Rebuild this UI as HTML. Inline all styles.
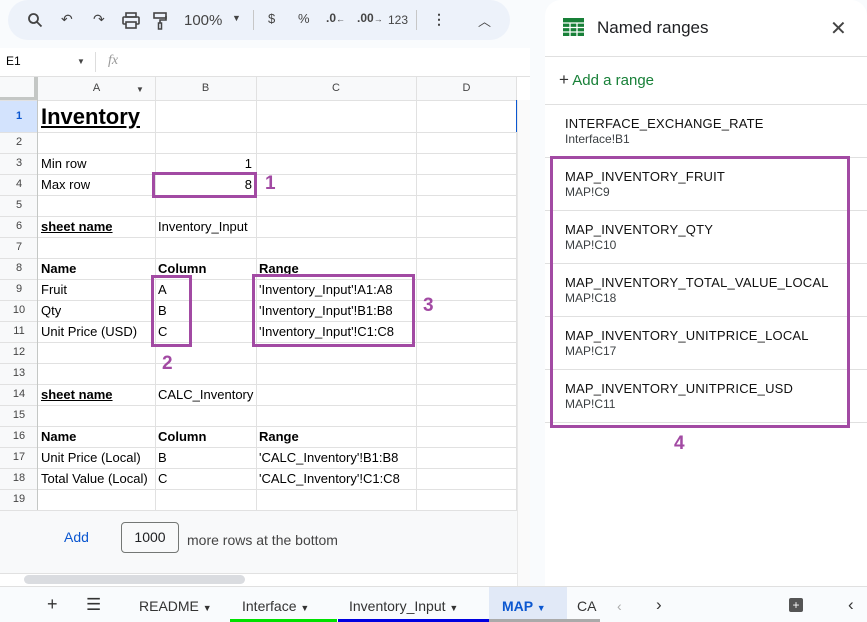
<!DOCTYPE html>
<html><head><meta charset="utf-8"><style>
*{box-sizing:border-box;margin:0;padding:0}
body{width:867px;height:622px;overflow:hidden;background:#f9fbfd;font-family:"Liberation Sans",Arial,sans-serif;position:relative;color:#000}
.a{position:absolute}
.tb{left:8px;top:0;width:502px;height:40px;border-radius:20px;background:#edf2fa}
.ti{position:absolute;top:11px;color:#444;font-size:14px}
.grid{left:0;top:48px;width:530px;height:538px;background:#fff}
.cell{position:absolute;font-size:13px;line-height:21px;white-space:nowrap;overflow:hidden}
.rn{position:absolute;left:0;width:38px;text-align:center;font-size:11px;color:#444;background:#f8f9fa}
.hl{position:absolute;left:0;width:517px;height:1px;background:#e1e1e1}
.vl{position:absolute;top:77px;width:1px;height:433px;background:#e1e1e1}
.pb{position:absolute;border:3px solid #a24aa3}
.pn{position:absolute;color:#a24aa3;font-weight:bold;font-size:19px}
.panel{left:545px;top:0;width:322px;height:586px;background:#fff;border-radius:16px 16px 0 0}
.it{position:absolute;left:20px;font-size:13px;color:#202124}
.it b{font-weight:normal;letter-spacing:.2px;display:block;font-size:13px;color:#111}
.it span{font-size:12px;color:#3c4043}
.dl{position:absolute;left:0;width:322px;height:1px;background:#e0e0e0}
.tab{position:absolute;top:598px;font-size:14px;color:#333}
</style></head><body>
<div class="a tb"></div>
<svg class="a" style="left:27px;top:12px" width="16" height="16" viewBox="0 0 16 16"><circle cx="6.5" cy="6.5" r="4.5" fill="none" stroke="#444" stroke-width="1.8"/><path d="M10 10l4.5 4.5" stroke="#444" stroke-width="1.8"/></svg>
<div class="ti" style="left:61px">↶</div>
<div class="ti" style="left:93px">↷</div>
<svg class="a" style="left:122px;top:12px" width="18" height="17" viewBox="0 0 18 17"><rect x="4" y="1" width="10" height="4" fill="none" stroke="#444" stroke-width="1.6"/><rect x="1" y="5" width="16" height="7" rx="1" fill="none" stroke="#444" stroke-width="1.6"/><rect x="4" y="10" width="10" height="6" fill="#edf2fa" stroke="#444" stroke-width="1.6"/></svg>
<svg class="a" style="left:153px;top:12px" width="14" height="18" viewBox="0 0 14 18"><rect x="1" y="1" width="12" height="5" fill="none" stroke="#444" stroke-width="1.6"/><path d="M13 4v4H7v3" fill="none" stroke="#444" stroke-width="1.6"/><rect x="5.5" y="11" width="3" height="6" fill="none" stroke="#444" stroke-width="1.5"/></svg>
<div class="ti" style="left:184px;top:12px;font-size:15px">100%</div>
<div class="ti" style="left:232px;top:13px;font-size:9px">▼</div>
<div class="a" style="left:253px;top:10px;width:1px;height:20px;background:#c7c7c7"></div>
<div class="ti" style="left:268px;font-size:13px">$</div>
<div class="ti" style="left:298px;font-size:13px">%</div>
<div class="ti" style="left:326px;font-size:12px;font-weight:bold">.0<span style="font-size:9px">←</span></div>
<div class="ti" style="left:357px;font-size:12px;font-weight:bold">.00<span style="font-size:9px">→</span></div>
<div class="ti" style="left:388px;font-size:12px;top:13px">123</div>
<div class="a" style="left:416px;top:10px;width:1px;height:20px;background:#c7c7c7"></div>
<div class="ti" style="left:432px;font-weight:bold">⋮</div>
<div class="ti" style="left:478px;font-size:13px">︿</div>

<div class="a grid"></div>
<div class="a" style="left:6px;top:54px;font-size:12px">E1</div>
<div class="a" style="left:77px;top:57px;font-size:8px;color:#444">▼</div>
<div class="a" style="left:95px;top:52px;width:1px;height:20px;background:#ddd"></div>
<div class="a" style="left:108px;top:53px;font-size:14px;color:#999;font-style:italic;font-family:'Liberation Serif',serif">fx</div>
<div class="a" style="left:0;top:76px;width:530px;height:1px;background:#e1e1e1"></div>
<div class="a" style="left:0;top:77px;width:517px;height:23px;background:#f8f9fa"></div>
<div class="a" style="left:0;top:77px;width:37px;height:23px;background:#f8f9fa;border-right:3px solid #c4c7c5;border-bottom:3px solid #c4c7c5"></div>
<div class="cell" style="left:38px;top:78px;width:117px;text-align:center;font-size:11px;color:#444">A</div>
<div class="cell" style="left:136px;top:79px;font-size:8px;color:#444">▼</div>
<div class="cell" style="left:155px;top:78px;width:101px;text-align:center;font-size:11px;color:#444">B</div>
<div class="cell" style="left:256px;top:78px;width:160px;text-align:center;font-size:11px;color:#444">C</div>
<div class="cell" style="left:416px;top:78px;width:101px;text-align:center;font-size:11px;color:#444">D</div>
<div class="a" style="left:0;top:100px;width:38px;height:32px;background:#d3e3fd"></div>
<div class="rn" style="top:100px;height:32px;line-height:32px;background:#d3e3fd;font-weight:bold;color:#0b57d0">1</div>
<div class="rn" style="top:132px;height:21px;line-height:21px">2</div>
<div class="rn" style="top:153px;height:21px;line-height:21px">3</div>
<div class="rn" style="top:174px;height:21px;line-height:21px">4</div>
<div class="rn" style="top:195px;height:21px;line-height:21px">5</div>
<div class="rn" style="top:216px;height:21px;line-height:21px">6</div>
<div class="rn" style="top:237px;height:21px;line-height:21px">7</div>
<div class="rn" style="top:258px;height:21px;line-height:21px">8</div>
<div class="rn" style="top:279px;height:21px;line-height:21px">9</div>
<div class="rn" style="top:300px;height:21px;line-height:21px">10</div>
<div class="rn" style="top:321px;height:21px;line-height:21px">11</div>
<div class="rn" style="top:342px;height:21px;line-height:21px">12</div>
<div class="rn" style="top:363px;height:21px;line-height:21px">13</div>
<div class="rn" style="top:384px;height:21px;line-height:21px">14</div>
<div class="rn" style="top:405px;height:21px;line-height:21px">15</div>
<div class="rn" style="top:426px;height:21px;line-height:21px">16</div>
<div class="rn" style="top:447px;height:21px;line-height:21px">17</div>
<div class="rn" style="top:468px;height:21px;line-height:21px">18</div>
<div class="rn" style="top:489px;height:21px;line-height:21px">19</div>
<div class="hl" style="top:100px"></div><div class="hl" style="top:132px"></div><div class="hl" style="top:153px"></div><div class="hl" style="top:174px"></div><div class="hl" style="top:195px"></div><div class="hl" style="top:216px"></div><div class="hl" style="top:237px"></div><div class="hl" style="top:258px"></div><div class="hl" style="top:279px"></div><div class="hl" style="top:300px"></div><div class="hl" style="top:321px"></div><div class="hl" style="top:342px"></div><div class="hl" style="top:363px"></div><div class="hl" style="top:384px"></div><div class="hl" style="top:405px"></div><div class="hl" style="top:426px"></div><div class="hl" style="top:447px"></div><div class="hl" style="top:468px"></div><div class="hl" style="top:489px"></div><div class="hl" style="top:510px"></div>
<div class="vl" style="left:37px;background:#c4c7c5"></div><div class="vl" style="left:155px"></div><div class="vl" style="left:256px"></div><div class="vl" style="left:416px"></div><div class="vl" style="left:516px"></div>
<div class="a" style="left:516px;top:100px;width:2px;height:32px;background:#0b57d0"></div>

<div class="cell" style="left:41px;top:104px;font-size:22px;line-height:25px;font-weight:bold;text-decoration:underline">Inventory</div>
<div class="cell" style="left:41px;top:153px">Min row</div>
<div class="cell" style="left:158px;top:153px;width:94px;text-align:right">1</div>
<div class="cell" style="left:41px;top:174px">Max row</div>
<div class="cell" style="left:158px;top:174px;width:94px;text-align:right">8</div>
<div class="cell" style="left:41px;top:216px;font-weight:bold;text-decoration:underline">sheet name</div>
<div class="cell" style="left:158px;top:216px;width:98px">Inventory_Input</div>
<div class="cell" style="left:41px;top:258px;font-weight:bold">Name</div>
<div class="cell" style="left:158px;top:258px;font-weight:bold">Column</div>
<div class="cell" style="left:259px;top:258px;font-weight:bold">Range</div>
<div class="cell" style="left:41px;top:279px">Fruit</div><div class="cell" style="left:158px;top:279px">A</div><div class="cell" style="left:259px;top:279px">'Inventory_Input'!A1:A8</div>
<div class="cell" style="left:41px;top:300px">Qty</div><div class="cell" style="left:158px;top:300px">B</div><div class="cell" style="left:259px;top:300px">'Inventory_Input'!B1:B8</div>
<div class="cell" style="left:41px;top:321px">Unit Price (USD)</div><div class="cell" style="left:158px;top:321px">C</div><div class="cell" style="left:259px;top:321px">'Inventory_Input'!C1:C8</div>
<div class="cell" style="left:41px;top:384px;font-weight:bold;text-decoration:underline">sheet name</div>
<div class="cell" style="left:158px;top:384px;width:98px">CALC_Inventory</div>
<div class="cell" style="left:41px;top:426px;font-weight:bold">Name</div>
<div class="cell" style="left:158px;top:426px;font-weight:bold">Column</div>
<div class="cell" style="left:259px;top:426px;font-weight:bold">Range</div>
<div class="cell" style="left:41px;top:447px">Unit Price (Local)</div><div class="cell" style="left:158px;top:447px">B</div><div class="cell" style="left:259px;top:447px">'CALC_Inventory'!B1:B8</div>
<div class="cell" style="left:41px;top:468px;width:114px">Total Value (Local)</div><div class="cell" style="left:158px;top:468px">C</div><div class="cell" style="left:259px;top:468px">'CALC_Inventory'!C1:C8</div>

<div class="a" style="left:0;top:511px;width:517px;height:63px;background:#f8f9fa"></div>
<div class="a" style="left:64px;top:529px;font-size:14px;color:#0b57d0">Add</div>
<div class="a" style="left:121px;top:522px;width:58px;height:31px;border:1px solid #747775;border-radius:4px;font-size:14px;text-align:center;line-height:29px;color:#202124">1000</div>
<div class="a" style="left:187px;top:532px;font-size:14px;color:#444">more rows at the bottom</div>
<div class="a" style="left:0;top:573px;width:517px;height:13px;background:#fff;border-top:1px solid #e1e1e1"></div>
<div class="a" style="left:24px;top:575px;width:221px;height:9px;border-radius:5px;background:#dadce0"></div>
<div class="a" style="left:517px;top:100px;width:13px;height:486px;background:#fafafa;border-left:1px solid #e8e8e8"></div>

<div class="pb" style="left:152px;top:172px;width:105px;height:26px"></div>
<div class="pb" style="left:151px;top:275px;width:41px;height:72px"></div>
<div class="pb" style="left:252px;top:274px;width:163px;height:73px"></div>
<div class="pn" style="left:265px;top:173px">1</div>
<div class="pn" style="left:162px;top:353px">2</div>
<div class="pn" style="left:423px;top:295px">3</div>

<div class="a panel">
<svg class="a" style="left:18px;top:18px" width="21" height="18" viewBox="0 0 21 18"><rect width="21" height="18" fill="#188038"/><path d="M0 5h21M0 9.5h21M0 14h21M7 5v13M14 5v13" stroke="#fff" stroke-width="1.3"/></svg>
<div class="a" style="left:52px;top:18px;font-size:17px;color:#202124">Named ranges</div>
<div class="a" style="left:285px;top:16px;font-size:20px;color:#444">✕</div>
<div class="dl" style="top:56px"></div>
<div class="a" style="left:14px;top:70px;font-size:15px;color:#188038"><span style="color:#333;font-size:17px">+</span> Add a range</div>
<div class="dl" style="top:104px"></div>
<div class="it" style="top:116px"><b>INTERFACE_EXCHANGE_RATE</b><span>Interface!B1</span></div>
<div class="dl" style="top:157px"></div>
<div class="it" style="top:169px"><b>MAP_INVENTORY_FRUIT</b><span>MAP!C9</span></div>
<div class="dl" style="top:210px"></div>
<div class="it" style="top:222px"><b>MAP_INVENTORY_QTY</b><span>MAP!C10</span></div>
<div class="dl" style="top:263px"></div>
<div class="it" style="top:275px"><b>MAP_INVENTORY_TOTAL_VALUE_LOCAL</b><span>MAP!C18</span></div>
<div class="dl" style="top:316px"></div>
<div class="it" style="top:328px"><b>MAP_INVENTORY_UNITPRICE_LOCAL</b><span>MAP!C17</span></div>
<div class="dl" style="top:369px"></div>
<div class="it" style="top:381px"><b>MAP_INVENTORY_UNITPRICE_USD</b><span>MAP!C11</span></div>
<div class="dl" style="top:422px"></div>
<div class="pb" style="left:5px;top:156px;width:300px;height:272px"></div>
<div class="pn" style="left:129px;top:433px">4</div>
</div>

<div class="a" style="left:0;top:586px;width:867px;height:36px;background:#f9fbfd;border-top:1px solid #e0e0e0"></div>
<div class="tab" style="left:47px;font-size:18px;top:594px">+</div>
<div class="tab" style="left:86px;font-size:17px;top:595px">☰</div>
<div class="tab" style="left:139px">README <span style="font-size:9px">▼</span></div>
<div class="tab" style="left:242px">Interface <span style="font-size:9px">▼</span></div>
<div class="a" style="left:230px;top:619px;width:107px;height:3px;background:#00e000"></div>
<div class="tab" style="left:349px">Inventory_Input <span style="font-size:9px">▼</span></div>
<div class="a" style="left:338px;top:619px;width:151px;height:3px;background:#0000e0"></div>
<div class="a" style="left:489px;top:587px;width:78px;height:35px;background:#e1e9f7"></div>
<div class="tab" style="left:502px;color:#0b57d0;font-weight:bold">MAP <span style="font-size:9px">▼</span></div>
<div class="a" style="left:489px;top:619px;width:78px;height:3px;background:#aaa"></div>
<div class="tab" style="left:577px">CA</div>
<div class="a" style="left:567px;top:619px;width:33px;height:3px;background:#aaa"></div>
<div class="tab" style="left:617px;color:#aaa">‹</div>
<div class="tab" style="left:656px;font-size:17px;top:595px">›</div>
<div class="a" style="left:789px;top:598px;width:14px;height:14px;background:#555;border-radius:2px;color:#fff;font-size:12px;line-height:14px;text-align:center">+</div>
<div class="tab" style="left:848px;font-size:17px;top:595px">‹</div>
</body></html>
